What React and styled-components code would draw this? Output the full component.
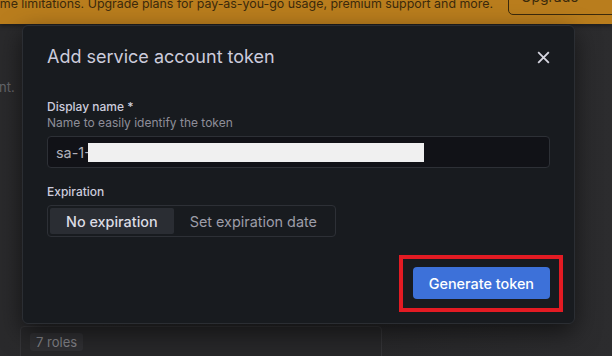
import React from "react";
import styled, { createGlobalStyle } from "styled-components";

const GlobalStyle = createGlobalStyle`
  html, body {
    margin: 0;
    padding: 0;
    background: #29292b;
    font-family: Inter, "Noto Sans", sans-serif;
  }
  * { box-sizing: border-box; }
`;

const Page = styled.div`
  position: relative;
  width: 612px;
  height: 356px;
  overflow: hidden;
  background: linear-gradient(90deg, #2a2a2c 0%, #262628 50%, #2c2c2e 100%);
`;

const Banner = styled.div`
  height: 24px;
  display: flex;
  justify-content: flex-end;
  align-items: flex-start;
  gap: 15px;
  overflow: hidden;
  white-space: nowrap;
  background: #b97d1d;
  box-shadow: 0 2px 4px rgba(0, 0, 0, 0.35);
`;

const BannerText = styled.span`
  margin-top: -5px;
  font-size: 12.4px;
  line-height: 18px;
  color: #3b2a0c;
  flex-shrink: 0;
`;

const BannerButton = styled.span`
  margin-top: -10px;
  margin-right: -20px;
  width: 124px;
  height: 25px;
  flex-shrink: 0;
  border: 1px solid #3b2a0c;
  border-radius: 5px;
  padding: 0 12px;
  font-size: 14px;
  line-height: 12px;
  color: #3b2a0c;
`;

const Body = styled.div`
  display: flex;
  flex-direction: column;
  padding: 55px 0 0 0;
`;

const SideText = styled.span`
  margin-left: -1px;
  font-size: 13px;
  line-height: 16px;
  color: #66666a;
`;

const BackCard = styled.div`
  margin: 231px 0 0 20px;
  width: 362px;
  height: 40px;
  border: 1px solid #343437;
  border-radius: 4px;
  padding: 4px 9px;
  background: #272729;
`;

const Pill = styled.span`
  display: inline-block;
  padding: 1px 6px;
  border-radius: 3px;
  background: #2f2f32;
  color: #818186;
  font-size: 13px;
  line-height: 16px;
`;

const Modal = styled.div`
  position: absolute;
  left: 22px;
  top: 25px;
  width: 553px;
  height: 299px;
  display: flex;
  flex-direction: column;
  padding: 20px 24px 24px 24px;
  background: #181b1f;
  border: 1px solid #2b2e33;
  border-radius: 6px;
  box-shadow: 0 8px 24px rgba(0, 0, 0, 0.55);
`;

const Header = styled.div`
  display: flex;
  justify-content: space-between;
  align-items: center;
  height: 22px;
`;

const Title = styled.h1`
  margin: 0;
  font-size: 18px;
  font-weight: 400;
  line-height: 22px;
  color: #ccccdc;
`;

const CloseButton = styled.button`
  display: flex;
  align-items: center;
  justify-content: center;
  width: 16px;
  height: 16px;
  margin-right: -1px;
  padding: 0;
  border: none;
  background: none;
  color: #d6d6e0;
`;

const Field = styled.div`
  display: flex;
  flex-direction: column;
  margin-top: ${(p) => p.$top}px;
`;

const Label = styled.label`
  font-size: 12px;
  font-weight: 500;
  line-height: 16px;
  color: #ccccdc;
`;

const Description = styled.span`
  font-size: 12px;
  line-height: 16px;
  color: #8e8e99;
`;

const Input = styled.div`
  margin-top: 5px;
  height: 32px;
  display: flex;
  align-items: center;
  padding: 0 8px;
  background: #111217;
  border: 1px solid #2d3036;
  border-radius: 4px;
  font-size: 14.4px;
  color: #b0b0ba;
`;

const Redacted = styled.span`
  display: inline-block;
  margin-left: -3px;
  width: 336px;
  height: 19px;
  background: #f0f0f0;
`;

const RadioGroup = styled.div`
  margin-top: 5px;
  align-self: flex-start;
  display: flex;
  height: 32px;
  padding: 2px;
  border: 1px solid #2d3036;
  border-radius: 4px;
`;

const RadioOption = styled.div`
  display: flex;
  align-items: center;
  padding: 0 16px;
  border-radius: 2px;
  font-size: 14.4px;
  font-weight: ${(p) => (p.$active ? 500 : 400)};
  color: ${(p) => (p.$active ? "#dcdce4" : "#9d9da8")};
  background: ${(p) => (p.$active ? "#2a2d33" : "transparent")};
`;

const Footer = styled.div`
  margin-top: auto;
  margin-right: -13px;
  margin-bottom: -13px;
  display: flex;
  justify-content: flex-end;
`;

const Highlight = styled.div`
  display: flex;
  padding: 8px 9px 9px 10px;
  border: 4px solid #e31b23;
`;

const PrimaryButton = styled.button`
  height: 32px;
  padding: 0 16px;
  border: none;
  border-radius: 4px;
  background: #3d71d9;
  color: #ffffff;
  font-family: inherit;
  font-size: 14.4px;
  font-weight: 500;
`;

const CloseIcon = () => (
  <svg width="13" height="13" viewBox="0 0 14 14" fill="none">
    <path d="M2 2L12 12M12 2L2 12" stroke="currentColor" strokeWidth="2" strokeLinecap="square" />
  </svg>
);

const App = () => {
  return (
    <Page>
      <GlobalStyle />
      <Banner>
        <BannerText>
          ome limitations. Upgrade plans for pay-as-you-go usage, premium support and more.
        </BannerText>
        <BannerButton>Upgrade</BannerButton>
      </Banner>
      <Body>
        <SideText>nt.</SideText>
        <BackCard>
          <Pill>7 roles</Pill>
        </BackCard>
      </Body>

      <Modal>
        <Header>
          <Title>Add service account token</Title>
          <CloseButton>
            <CloseIcon />
          </CloseButton>
        </Header>
        <Field $top={31}>
          <Label>Display name *</Label>
          <Description>Name to easily identify the token</Description>
          <Input>
            sa-1-
            <Redacted />
          </Input>
        </Field>
        <Field $top={16}>
          <Label>Expiration</Label>
          <RadioGroup>
            <RadioOption $active>No expiration</RadioOption>
            <RadioOption>Set expiration date</RadioOption>
          </RadioGroup>
        </Field>
        <Footer>
          <Highlight>
            <PrimaryButton>Generate token</PrimaryButton>
          </Highlight>
        </Footer>
      </Modal>
    </Page>
  );
};

export default App;
